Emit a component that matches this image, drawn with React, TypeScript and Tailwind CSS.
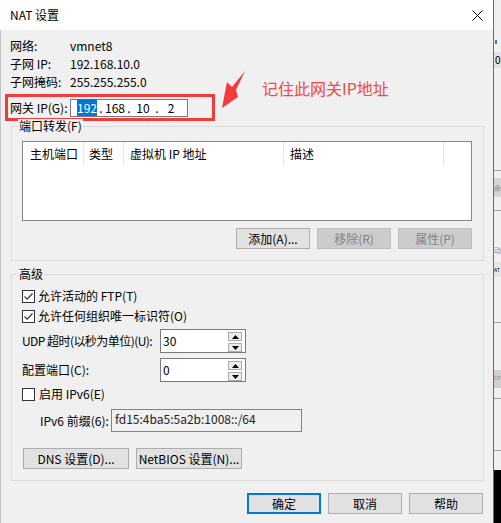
import React from 'react'

function Check({ checked }: { checked?: boolean }) {
  return (
    <span className="flex h-[13px] w-[13px] shrink-0 items-center justify-center border border-[#333333] bg-white">
      {checked && (
        <svg width="11" height="11" viewBox="0 0 11 11">
          <path d="M1.5 5.5 L4.2 8.2 L9.5 2.5" fill="none" stroke="#333333" strokeWidth="1.2" />
        </svg>
      )}
    </span>
  )
}

function Btn({
  children,
  className,
  disabled,
  primary,
}: {
  children: React.ReactNode
  className: string
  disabled?: boolean
  primary?: boolean
}) {
  const tone = disabled
    ? 'border border-[#bfbfbf] bg-[#cccccc] text-[#838383]'
    : primary
      ? 'border-2 border-[#0078d7] bg-[#e1e1e1] text-black'
      : 'border border-[#adadad] bg-[#e1e1e1] text-black'
  return (
    <div className={`flex h-[21px] items-center justify-center whitespace-nowrap leading-[14px] ${tone} ${className}`}>
      {children}
    </div>
  )
}

function SpinBtn({ up }: { up?: boolean }) {
  return (
    <div className="flex h-[9px] w-[14px] items-center justify-center border border-[#acacac] bg-[#ececec]">
      <svg width="7" height="4" viewBox="0 0 7 4">
        {up ? <path d="M0 4 L3.5 0 L7 4 Z" fill="#000" /> : <path d="M0 0 L3.5 4 L7 0 Z" fill="#000" />}
      </svg>
    </div>
  )
}

function Spin({ value }: { value: string }) {
  return (
    <div className="flex h-[24px] w-[86px] border border-[#7a7a7a] bg-white">
      <span className="flex-1 pl-[2px] pt-[4px] leading-[14px]">{value}</span>
      <div className="flex flex-col gap-[2px] pr-[3px] pt-[2px]">
        <SpinBtn up />
        <SpinBtn />
      </div>
    </div>
  )
}

function Legend({ children }: { children: React.ReactNode }) {
  return (
    <span className="absolute left-[6px] top-[-8px] bg-[#f0f0f0] px-[1px] leading-[14px]">{children}</span>
  )
}

const columns = [
  { label: '主机端口', cls: 'w-[61px] pl-[7px]' },
  { label: '类型', cls: 'w-[40px] pl-[5px]' },
  { label: '虚拟机 IP 地址', cls: 'w-[160px] pl-[6px]' },
  { label: '描述', cls: 'w-[160px] pl-[6px]' },
]

const info = [
  ['网络:', 'vmnet8'],
  ['子网 IP:', '192.168.10.0'],
  ['子网掩码:', '255.255.255.0'],
]

export default function App() {
  return (
    <div className="flex h-[523px] w-[501px] overflow-hidden bg-[#f0f0f0] font-['Noto_Sans_CJK_SC','Noto_Sans',sans-serif] text-[12px] text-black">
      {/* dialog */}
      <div className="relative flex h-full w-[494px] shrink-0 flex-col border-r border-[#6b6b6b] bg-[#f0f0f0]">
        <div className="flex h-[30px] items-center justify-between bg-white pl-[10px] pr-[10px]">
          <span className="leading-[16px]">NAT 设置</span>
          <svg width="11" height="11" viewBox="0 0 11 11">
            <path d="M0.5 0.5 L10.5 10.5 M10.5 0.5 L0.5 10.5" stroke="#000" strokeWidth="1" />
          </svg>
        </div>

        <div className="flex flex-1 flex-col border-l border-[#c4c4c4] pl-[9px] pt-[7px]">
          {info.map(([k, v]) => (
            <div key={k} className="flex h-[18px] items-center leading-[14px]">
              <span className="w-[60px]">{k}</span>
              <span>{v}</span>
            </div>
          ))}

          <div className="ml-[-5px] mt-[3px] flex h-[27px] w-[210px] items-center border-[3px] border-[#f23c3c] pl-[2px] leading-[14px]">
            <span className="w-[60px]">网关 IP(G):</span>
            <div className="flex h-[18px] w-[118px] items-center border border-[#7a7a7a] bg-white pl-[5px]">
              <span className="w-[22px] text-center">
                <span className="bg-[#0078d7] text-white">192</span>
              </span>
              <span className="w-[6px] text-center">.</span>
              <span className="w-[22px] text-center">168</span>
              <span className="w-[6px] text-center">.</span>
              <span className="w-[22px] text-center">10</span>
              <span className="w-[6px] text-center">.</span>
              <span className="w-[22px] text-center">2</span>
            </div>
          </div>

          {/* 端口转发 */}
          <div className="relative ml-[1px] mt-[5px] h-[135px] w-[473px] border border-[#dcdcdc] pl-[10px] pt-[14px]">
            <Legend>端口转发(F)</Legend>
            <div className="h-[80px] w-[450px] border border-[#828790] bg-white">
              <div className="flex h-[24px]">
                {columns.map((c) => (
                  <div key={c.label} className={`flex items-center border-r border-[#e5e5e5] leading-[14px] ${c.cls}`}>
                    {c.label}
                  </div>
                ))}
              </div>
            </div>
            <div className="mt-[7px] flex w-[450px] justify-end gap-[7px]">
              <Btn className="w-[74px]">添加(A)...</Btn>
              <Btn className="w-[74px]" disabled>
                移除(R)
              </Btn>
              <Btn className="w-[74px]" disabled>
                属性(P)
              </Btn>
            </div>
          </div>

          {/* 高级 */}
          <div className="relative ml-[1px] mt-[13px] h-[207px] w-[473px] border border-[#dcdcdc] pl-[10px] pt-[11px] leading-[14px]">
            <Legend>高级</Legend>
            <div className="flex h-[20px] items-center gap-[3px]">
              <Check checked />
              <span>允许活动的 FTP(T)</span>
            </div>
            <div className="flex h-[20px] items-center gap-[3px]">
              <Check checked />
              <span>允许任何组织唯一标识符(O)</span>
            </div>
            <div className="mt-[3px] flex h-[24px] items-center">
              <span className="w-[138px] whitespace-nowrap tracking-[-0.55px]">UDP 超时(以秒为单位)(U):</span>
              <Spin value="30" />
            </div>
            <div className="mt-[5px] flex h-[24px] items-center">
              <span className="w-[138px]">配置端口(C):</span>
              <Spin value="0" />
            </div>
            <div className="mt-[2px] flex h-[20px] items-center gap-[4px]">
              <Check />
              <span>启用 IPv6(E)</span>
            </div>
            <div className="mt-[5px] flex h-[23px] items-center pl-[18px]">
              <span className="w-[71px] whitespace-nowrap">IPv6 前缀(6):</span>
              <div className="h-[23px] w-[191px] border border-[#838383] bg-[#f0f0f0] pl-[3px] pt-[2px] text-[#222222]">
                fd15:4ba5:5a2b:1008::/64
              </div>
            </div>
            <div className="mt-[16px] flex gap-[7px] pl-[1px]">
              <Btn className="w-[106px]">DNS 设置(D)...</Btn>
              <Btn className="w-[106px]">NetBIOS 设置(N)...</Btn>
            </div>
          </div>

          <div className="ml-[1px] mt-[12px] flex w-[473px] justify-end gap-[7px] pr-[1px]">
            <Btn className="w-[74px]" primary>
              确定
            </Btn>
            <Btn className="w-[74px]">取消</Btn>
            <Btn className="w-[74px]">帮助</Btn>
          </div>
        </div>

        {/* annotation */}
        <svg className="absolute left-[218px] top-[68px]" width="30" height="44" viewBox="0 0 30 44">
          <polygon points="27,3 18,22 20,29 4,40 9,14 14,19" fill="#f23c3c" />
        </svg>
        <span className="absolute left-[262px] top-[79px] text-[16px] leading-[18px] text-[#f24848]">
          记住此网关IP地址
        </span>
      </div>

      {/* window behind */}
      <div className="flex h-full w-[7px] flex-col overflow-hidden bg-[#f0f0f0] leading-[16px]">
        <div className="h-[40px] shrink-0" />
        <div className="ml-[1px] h-[4px] w-[2px] shrink-0 bg-[#3c7fb1]" />
        <div className="h-[8px] shrink-0" />
        <div className="h-[16px] shrink-0 bg-[#e1e1e1] pl-[1px] text-[10px]">0</div>
        <div className="h-[102px] shrink-0" />
        <div className="h-px shrink-0 bg-[#a0a0a0]" />
        <div className="h-[7px] shrink-0" />
        <div className="h-[19px] shrink-0 bg-[#d4d4d4] pt-[2px] text-[7px] text-[#8a8a8a]">命</div>
        <div className="h-[13px] shrink-0" />
        <div className="h-px shrink-0 bg-[#a0a0a0]" />
        <div className="h-[31px] shrink-0" />
        <div className="h-[16px] shrink-0 text-[7px] text-[#8a8a8a]">动</div>
        <div className="h-[4px] shrink-0" />
        <div className="h-[15px] shrink-0 bg-[#e5e5e5] text-[5px]">AT</div>
        <div className="h-[45px] shrink-0" />
        <div className="h-px shrink-0 bg-[#a0a0a0]" />
        <div className="h-[47px] shrink-0" />
        <div className="h-[18px] shrink-0 bg-[#cfcfcf] text-[5px] text-[#8a8a8a]">CP</div>
        <div className="h-[10px] shrink-0" />
        <div className="h-px shrink-0 bg-[#a0a0a0]" />
        <div className="h-[51px] shrink-0" />
        <div className="h-px shrink-0 bg-[#a0a0a0]" />
        <div className="h-[19px] shrink-0" />
        <div className="flex-1 bg-black" />
      </div>
    </div>
  )
}
